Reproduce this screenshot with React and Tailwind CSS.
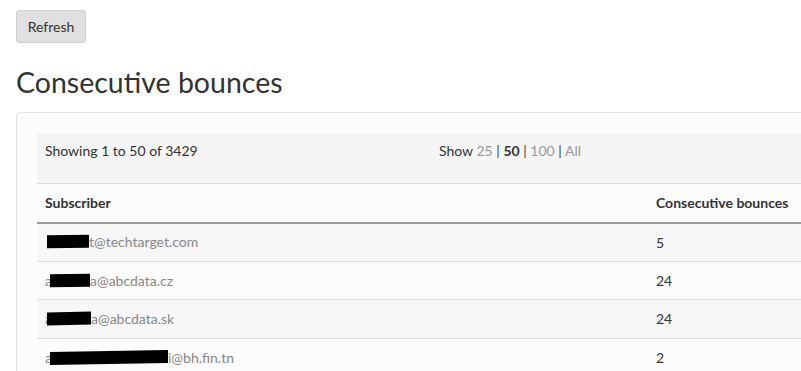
import React from 'react';

const rows = [
  { pre: '', box: 'w-[42px]', lead: 'ml-[2px]', rest: 't@techtarget.com', n: '5' },
  { pre: 'a', box: 'w-[40px]', lead: 'ml-[-2px]', rest: 'a@abcdata.cz', n: '24' },
  { pre: 'a', box: 'w-[44px]', lead: 'ml-[-5px]', rest: 'a@abcdata.sk', n: '24' },
  { pre: 'a', box: 'w-[118px]', lead: 'ml-[-2px]', rest: 'i@bh.fin.tn', n: '2' },
];

export default function App() {
  return (
    <div className="w-[801px] h-[371px] overflow-hidden bg-white text-[#333] font-['Lato','Liberation_Sans',sans-serif]">
      <div className="pl-4 pt-[10px]">
        <button className="h-[33px] w-[70px] rounded-[3px] border border-[#cfcfcf] bg-[#e0e0e0] text-[14px] text-[#333]">
          Refresh
        </button>
        <h1 className="mt-[19px] text-[28.5px] leading-[40px] font-normal text-[#333]">Consecutive bounces</h1>

        <div className="mt-[10px] w-[830px] rounded-tl-[4px] border border-[#e3e3e3] bg-[#fcfcfc] px-5 pt-5 shadow-[0_1px_1px_rgba(0,0,0,0.05)]">
          <div className="flex h-[50px] bg-[#f5f5f5] pt-[7px] text-[14px]">
            <div className="w-1/2 px-2">Showing 1 to 50 of 3429</div>
            <div className="w-1/2 px-2">
              Show <span className="text-[#999]">25</span> <span className="text-[#444]">|</span>{' '}
              <span className="font-bold">50</span> <span className="text-[#444]">|</span>{' '}
              <span className="text-[#999]">100</span> <span className="text-[#444]">|</span>{' '}
              <span className="text-[#999]">All</span>
            </div>
          </div>

          <table className="w-full border-collapse text-[14px]">
            <thead>
              <tr className="border-t border-[#ddd]">
                <th className="w-[611px] border-b-2 border-[#999] px-2 h-[39px] text-left font-bold">Subscriber</th>
                <th className="border-b-2 border-[#999] px-2 h-[39px] text-left font-bold">Consecutive bounces</th>
              </tr>
            </thead>
            <tbody>
              {rows.map((r, i) => (
                <tr key={i} className={`${i > 0 ? 'border-t border-[#ddd]' : ''} ${i % 2 === 0 ? 'bg-[#f7f7f7]' : 'bg-[#fcfcfc]'}`}>
                  <td className="px-2 h-[38.6px] text-[#888]">
                    <span className="inline-flex items-center">
                      {r.pre && <span>{r.pre}</span>}
                      <span className={`inline-block ${r.box} ${r.lead} h-[13px] bg-black -skew-y-1`}></span>
                      <span>{r.rest}</span>
                    </span>
                  </td>
                  <td className="px-2 h-[38.6px]">{r.n}</td>
                </tr>
              ))}
            </tbody>
          </table>
        </div>
      </div>
    </div>
  );
}
